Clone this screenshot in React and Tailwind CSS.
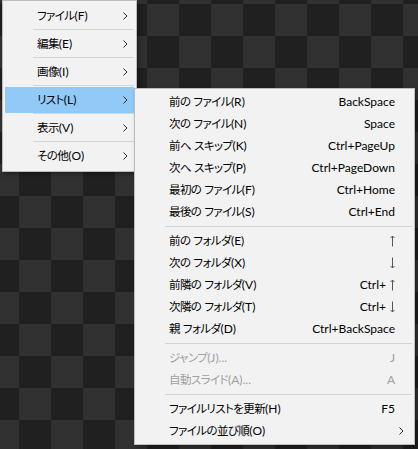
const mainItems = ['ファイル(F)', '編集(E)', '画像(I)', 'リスト(L)', '表示(V)', 'その他(O)'];

const listGroups = [
  [
    { label: '前の ファイル(R)', key: 'BackSpace' },
    { label: '次の ファイル(N)', key: 'Space' },
    { label: '前へ スキップ(K)', key: 'Ctrl+PageUp' },
    { label: '次へ スキップ(P)', key: 'Ctrl+PageDown' },
    { label: '最初の ファイル(F)', key: 'Ctrl+Home' },
    { label: '最後の ファイル(S)', key: 'Ctrl+End' },
  ],
  [
    { label: '前の フォルダ(E)', arrow: 'up' },
    { label: '次の フォルダ(X)', arrow: 'down' },
    { label: '前隣の フォルダ(V)', key: 'Ctrl+', arrow: 'up' },
    { label: '次隣の フォルダ(T)', key: 'Ctrl+', arrow: 'down' },
    { label: '親 フォルダ(D)', key: 'Ctrl+BackSpace' },
  ],
  [
    { label: 'ジャンプ(J)...', key: 'J', disabled: true },
    { label: '自動スライド(A)...', key: 'A', disabled: true },
  ],
  [
    { label: 'ファイルリストを更新(H)', key: 'F5' },
    { label: 'ファイルの並び順(O)', sub: true },
  ],
];

// Japanese runs are set a bit smaller so they sit as narrow as the Windows UI font
const Label = ({ text }) => (
  <span>
    {text.split(/([\u3000-\u30ff\u4e00-\u9fff]+)/).map((part, i) =>
      i % 2 === 1 ? (
        <span key={i} className="text-[11.5px] tracking-[-0.6px]">
          {part}
        </span>
      ) : (
        part
      )
    )}
  </span>
);

const Chevron = () => (
  <svg width="5" height="8" viewBox="0 0 5 8" className="shrink-0">
    <polyline points="0.5,0.5 4,4 0.5,7.5" fill="none" stroke="#2b2b2b" strokeWidth="1" />
  </svg>
);

const Arrow = ({ dir }) => (
  <svg width="5" height="12" viewBox="0 0 5 12" className="shrink-0">
    {dir === 'up' ? (
      <>
        <line x1="2.5" y1="1" x2="2.5" y2="11.5" stroke="#555" strokeWidth="1" />
        <polyline points="0.5,3 2.5,1 4.5,3" fill="none" stroke="#555" strokeWidth="1" />
      </>
    ) : (
      <>
        <line x1="2.5" y1="0.5" x2="2.5" y2="11" stroke="#555" strokeWidth="1" />
        <polyline points="0.5,9 2.5,11 4.5,9" fill="none" stroke="#555" strokeWidth="1" />
      </>
    )}
  </svg>
);

const MainMenu = () => (
  <div className="absolute left-[2px] top-0 w-[135px] border border-[#bdbdbd] bg-[#f2f2f2] p-[2px] shadow-[2px_2px_4px_rgba(0,0,0,0.35)]">
    {mainItems.map((item, i) => (
      <div key={item}>
        {i > 0 && <div className="ml-[28px] h-[2px] border-t border-[#d4d4d4]" />}
        <div
          className={`flex h-[26px] items-center justify-between pl-[32px] pr-[6px] ${
            i === 3 ? 'bg-[#91c9f7]' : ''
          }`}
        >
          <Label text={item} />
          <Chevron />
        </div>
      </div>
    ))}
  </div>
);

const ListMenu = () => (
  <div className="absolute left-[134px] top-[88px] w-[281px] border border-[#bdbdbd] bg-[#f2f2f2] p-[2px] shadow-[2px_2px_4px_rgba(0,0,0,0.35)]">
    {listGroups.map((group, g) => (
      <div key={g}>
        {g > 0 && (
          <div className="flex h-[7px] items-center pl-[28px]">
            <div className="h-px w-full bg-[#d4d4d4]" />
          </div>
        )}
        {group.map((item) => (
          <div
            key={item.label}
            className={`flex h-[22px] items-center justify-between pl-[32px] ${
              item.sub ? 'pr-[8px]' : 'pr-[17px]'
            } ${item.disabled ? 'text-[#a0a0a0]' : 'text-black'}`}
          >
            <Label text={item.label} />
            {item.sub ? (
              <Chevron />
            ) : (
              <span className="flex items-center gap-[4px]">
                {item.key && <span>{item.key}</span>}
                {item.arrow && <Arrow dir={item.arrow} />}
              </span>
            )}
          </div>
        ))}
      </div>
    ))}
  </div>
);

export default function App() {
  return (
    <div className="relative h-[449px] w-[418px] overflow-hidden bg-[#202020] bg-[image:conic-gradient(#202020_25%,#313131_0_50%,#202020_0_75%,#313131_0)] bg-[length:64px_64px] bg-[position:19px_4px] font-['Lato','Noto_Sans_CJK_JP',sans-serif] text-[12px] text-black [font-feature-settings:'palt']">
      <MainMenu />
      <ListMenu />
    </div>
  );
}
